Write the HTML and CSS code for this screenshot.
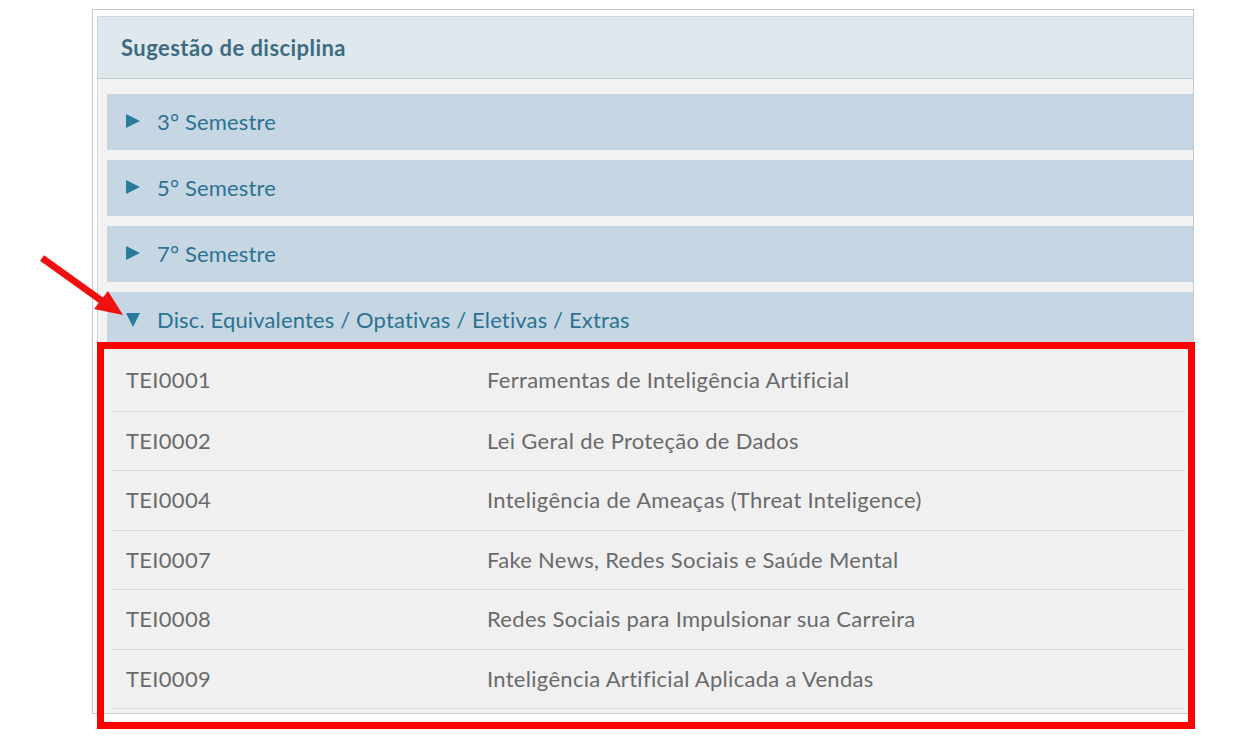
FILE: index.html
```html
<!DOCTYPE html>
<html lang="pt-BR">
<head>
    <meta charset="UTF-8">
    <meta name="viewport" content="width=device-width, initial-scale=1.0">
    <title>Sugestão de disciplina</title>
    <link rel="stylesheet" href="styles.css">
</head>
<body>
    <div class="frame">
        <div class="panel">
            <div class="panel-heading">Sugestão de disciplina</div>
            <div class="panel-body">
                <div class="group">
                    <div class="group-title"><span class="caret"></span>3° Semestre</div>
                </div>
                <div class="group">
                    <div class="group-title"><span class="caret"></span>5° Semestre</div>
                </div>
                <div class="group">
                    <div class="group-title"><span class="caret"></span>7° Semestre</div>
                </div>
                <div class="group open">
                    <div class="group-title"><span class="caret"></span>Disc. Equivalentes / Optativas / Eletivas / Extras</div>
                    <div class="course-list">
                        <div class="course"><span class="code">TEI0001</span><span class="name">Ferramentas de Inteligência Artificial</span></div>
                        <div class="course"><span class="code">TEI0002</span><span class="name">Lei Geral de Proteção de Dados</span></div>
                        <div class="course"><span class="code">TEI0004</span><span class="name">Inteligência de Ameaças (Threat Inteligence)</span></div>
                        <div class="course"><span class="code">TEI0007</span><span class="name">Fake News, Redes Sociais e Saúde Mental</span></div>
                        <div class="course"><span class="code">TEI0008</span><span class="name">Redes Sociais para Impulsionar sua Carreira</span></div>
                        <div class="course"><span class="code">TEI0009</span><span class="name">Inteligência Artificial Aplicada a Vendas</span></div>
                    </div>
                </div>
            </div>
        </div>
    </div>

    <!-- marcação em vermelho por cima do print -->
    <div class="highlight"></div>
    <svg class="arrow" width="130" height="80" viewBox="0 0 130 80">
        <line x1="2" y1="4" x2="62" y2="47" stroke="#f01010" stroke-width="7"/>
        <polygon points="54,55 68,37 83,61" fill="#f01010"/>
    </svg>
</body>
</html>
```

FILE: styles.css
```css
body {
    margin: 0;
    padding: 0;
    background: #ffffff;
    font-family: Lato, "Open Sans", sans-serif;
    position: relative;
    height: 737px;
    overflow: hidden;
}
.frame {
    margin: 9px 0 0 92px;
    width: 1102px;
    height: 705px;
    border: 1px solid #c8c8c8;
    padding: 6px 0 0 4px;
    box-sizing: border-box;
    overflow: hidden;
    background: #ffffff;
}
.panel {
    border: 1px solid #ccd6db;
    border-right: none;
    background: #f2f2f2;
    height: 100%;
}
.panel-heading {
    height: 61px;
    line-height: 61px;
    padding-left: 23px;
    background: #dfe8ed;
    border-bottom: 1px solid #c2cbd0;
    color: #3d6c82;
    font-weight: bold;
    font-size: 22px;
    letter-spacing: 0.45px;
}
.panel-body {
    padding: 15px 0 0 9px;
}
.group {
    margin-bottom: 10px;
}
.group-title {
    display: flex;
    align-items: center;
    height: 56px;
    padding: 0 0 2px 19px;
    box-sizing: border-box;
    background: #c6d7e3;
    color: #2b7292;
    font-size: 22px;
    letter-spacing: 0.15px;
}
.caret {
    width: 0;
    height: 0;
    margin-right: 17px;
    border-left: 14px solid #2a7b9b;
    border-top: 7px solid transparent;
    border-bottom: 7px solid transparent;
}
.open .caret {
    margin: 2px 17px 0 0;
    border-left: 7px solid transparent;
    border-right: 7px solid transparent;
    border-top: 14px solid #2a7b9b;
    border-bottom: none;
}
.course-list {
    padding: 0 8px 0 5px;
}
.course {
    display: flex;
    height: 58.4px;
    line-height: 58px;
    padding-left: 14px;
    border-bottom: 1px solid #dadada;
    background: #f0f0f0;
    color: #6a6a6a;
    font-size: 22px;
    letter-spacing: 0.3px;
}
.course:first-child {
    height: 63px;
    line-height: 63px;
}
.code {
    width: 361px;
}
.highlight {
    position: absolute;
    left: 97px;
    top: 342px;
    width: 1098px;
    height: 387px;
    border: 7px solid #ff0000;
    box-sizing: border-box;
}
.arrow {
    position: absolute;
    left: 40px;
    top: 254px;
}
```
